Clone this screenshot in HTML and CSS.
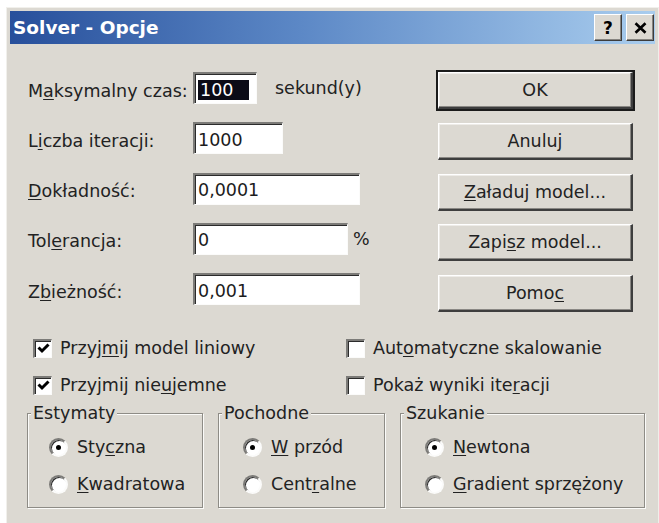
FILE: index.html
```html
<!DOCTYPE html>
<html lang="pl">
<head>
<meta charset="utf-8">
<title>Solver - Opcje</title>
<link rel="stylesheet" href="styles.css">
</head>
<body>
<div class="dialog">
  <div class="titlebar">
    <span class="title">Solver - Opcje</span>
    <div class="cap-btns">
      <span class="cap-btn">?</span>
      <span class="cap-btn">
        <svg width="13" height="12" viewBox="0 0 13 12"><path d="M1.5 1.2 L11.5 10.8 M11.5 1.2 L1.5 10.8" stroke="#000" stroke-width="2.6" fill="none"/></svg>
      </span>
    </div>
  </div>

  <div class="content">
    <div class="top">
      <div class="fields">
        <span class="lbl">M<u>a</u>ksymalny czas:</span>
        <div class="field-line">
          <div class="edit w-time"><span class="sel">100</span></div>
          <span class="unit-sec">sekund(y)</span>
        </div>

        <span class="lbl">L<u>i</u>czba iteracji:</span>
        <div class="field-line"><div class="edit w-iter">1000</div></div>

        <span class="lbl"><u>D</u>okładność:</span>
        <div class="field-line"><div class="edit w-prec">0,0001</div></div>

        <span class="lbl">Tol<u>e</u>rancja:</span>
        <div class="field-line">
          <div class="edit w-tol">0</div>
          <span class="unit-pct">%</span>
        </div>

        <span class="lbl">Z<u>b</u>ieżność:</span>
        <div class="field-line"><div class="edit w-conv">0,001</div></div>
      </div>

      <div class="buttons">
        <div class="btn btn-default">OK</div>
        <div class="btn">Anuluj</div>
        <div class="btn"><u>Z</u>aładuj model...</div>
        <div class="btn">Zapi<u>s</u>z model...</div>
        <div class="btn">Pomo<u>c</u></div>
      </div>
    </div>

    <div class="checks">
      <div class="check">
        <span class="box"><svg width="15" height="15" viewBox="0 0 15 15"><path d="M2.5 6.5 L6 10 L12.5 3.5" stroke="#000" stroke-width="3" fill="none"/></svg></span>
        <span>Przyj<u>m</u>ij model liniowy</span>
      </div>
      <div class="check">
        <span class="box"></span>
        <span>Aut<u>o</u>matyczne skalowanie</span>
      </div>
      <div class="check">
        <span class="box"><svg width="15" height="15" viewBox="0 0 15 15"><path d="M2.5 6.5 L6 10 L12.5 3.5" stroke="#000" stroke-width="3" fill="none"/></svg></span>
        <span>Przyjmij nie<u>u</u>jemne</span>
      </div>
      <div class="check">
        <span class="box"></span>
        <span>Pokaż wyniki ite<u>r</u>acji</span>
      </div>
    </div>

    <div class="groups">
      <fieldset class="group g-est">
        <legend>Estymaty</legend>
        <div class="radio-list">
          <div class="opt"><span class="radio on"></span><span>Sty<u>c</u>zna</span></div>
          <div class="opt"><span class="radio"></span><span><u>K</u>wadratowa</span></div>
        </div>
      </fieldset>
      <fieldset class="group g-der">
        <legend>Pochodne</legend>
        <div class="radio-list">
          <div class="opt"><span class="radio on"></span><span><u>W</u> przód</span></div>
          <div class="opt"><span class="radio"></span><span>Cent<u>r</u>alne</span></div>
        </div>
      </fieldset>
      <fieldset class="group g-search">
        <legend>Szukanie</legend>
        <div class="radio-list">
          <div class="opt"><span class="radio on"></span><span><u>N</u>ewtona</span></div>
          <div class="opt"><span class="radio"></span><span><u>G</u>radient sprzężony</span></div>
        </div>
      </fieldset>
    </div>
  </div>
</div>
</body>
</html>
```

FILE: styles.css
```css
* {
  box-sizing: border-box;
}

body {
  margin: 0;
  background: #ffffff;
  font-family: "DejaVu Sans", Tahoma, sans-serif;
  font-size: 17.5px;
  color: #222222;
}

u {
  text-decoration-thickness: 1px;
  text-underline-offset: 2px;
}

/* window frame */
.dialog {
  margin: 7px 0 0 6px;
  width: 653px;
  height: 516px;
  padding: 3px;
  background: #dcd9d2;
  border-top: 1px solid #f1f0ec;
  border-left: 1px solid #f1f0ec;
  border-right: 1px solid #efeeea;
}

.titlebar {
  height: 33px;
  display: flex;
  align-items: center;
  justify-content: space-between;
  padding: 0 1px 0 3px;
  background: linear-gradient(90deg, #274f9b 0%, #5c88c6 45%, #a9cdee 100%);
}

.title {
  color: #ffffff;
  font-weight: bold;
  font-size: 18.5px;
}

.cap-btns {
  display: flex;
  gap: 4px;
}

.cap-btn {
  width: 28px;
  height: 27px;
  display: flex;
  align-items: center;
  justify-content: center;
  background: #dcd9d2;
  border: 1px solid;
  border-color: #ffffff #3c3c3c #3c3c3c #ffffff;
  box-shadow: inset -1px -1px 0 #868480;
  font-weight: bold;
  font-size: 17px;
  color: #000000;
}

/* dialog body */
.content {
  padding: 28px 0 0 18px;
}

.top {
  display: grid;
  grid-template-columns: 410px 195px;
}

.fields {
  display: grid;
  grid-template-columns: 165px auto;
  grid-auto-rows: 32px;
  row-gap: 18.25px;
  align-items: center;
}

.lbl {
  padding-top: 5px;
  white-space: nowrap;
}

.field-line {
  display: flex;
  align-items: center;
}

.edit {
  height: 32px;
  display: flex;
  align-items: center;
  padding: 2px 0 0 3px;
  background: #ffffff;
  border-style: solid;
  border-width: 2px 1px 1px 2px;
  border-color: #7c7b78 #fbfbfa #fbfbfa #7c7b78;
  box-shadow: inset 1px 1px 0 #2b2b2b;
  color: #1c1c1c;
}

.w-time { width: 64px; }
.w-iter { width: 90px; }
.w-prec { width: 167px; }
.w-tol  { width: 155px; }
.w-conv { width: 167px; }

.sel {
  background: #0b0b16;
  color: #ffffff;
  padding: 0 16px 0 2px;
  line-height: 20px;
}

.unit-sec {
  margin-left: 18px;
}

.unit-pct {
  margin-left: 5px;
}

/* command buttons */
.buttons {
  display: flex;
  flex-direction: column;
  gap: 13.75px;
}

.btn {
  height: 37px;
  display: flex;
  align-items: center;
  justify-content: center;
  background: #dcd9d2;
  border-style: solid;
  border-width: 1px 2px 2px 1px;
  border-color: #ffffff #3e3e3e #3e3e3e #ffffff;
  box-shadow: inset -1px -1px 0 #8a8884, inset 1px 1px 0 #eeece8;
  white-space: nowrap;
}

.btn-default {
  outline: 2px solid #1b1b1b;
}

/* check boxes */
.checks {
  display: grid;
  grid-template-columns: 313px auto;
  grid-auto-rows: 20px;
  row-gap: 17px;
  margin: 26px 0 0 5px;
}

.check {
  display: flex;
  align-items: center;
  gap: 8px;
  white-space: nowrap;
}

.box {
  width: 19px;
  height: 19px;
  flex: none;
  display: flex;
  align-items: center;
  justify-content: center;
  background: #ffffff;
  border-style: solid;
  border-width: 2px 1px 1px 2px;
  border-color: #7c7b78 #fbfbfa #fbfbfa #7c7b78;
  box-shadow: inset 1px 1px 0 #2b2b2b;
}

/* option groups */
.groups {
  display: flex;
  gap: 15px;
  margin: 8px 0 0 -1px;
}

.group {
  margin: 0;
  min-width: 0;
  padding: 14px 0 13px 0;
  border: 1px solid #8e8c86;
  box-shadow: inset 1px 1px 0 #fbfbf9, 1px 1px 0 #fbfbf9;
}

.group legend {
  margin-left: 3px;
  padding: 0 2px;
  line-height: 20px;
  background: #dcd9d2;
}

.g-est    { width: 176px; }
.g-der    { width: 167px; }
.g-search { width: 245px; }

.radio-list {
  display: flex;
  flex-direction: column;
  gap: 17px;
  padding-left: 24px;
}

.g-est .radio-list {
  padding-left: 21px;
}

.opt {
  height: 20px;
  display: flex;
  align-items: center;
  gap: 9px;
  white-space: nowrap;
}

.radio {
  width: 19px;
  height: 19px;
  flex: none;
  display: flex;
  align-items: center;
  justify-content: center;
  border-radius: 50%;
  background: #ffffff;
  border: 2px solid;
  border-color: #7c7b78 #fbfbfa #fbfbfa #7c7b78;
  box-shadow: inset 1px 1px 0 #2b2b2b;
}

.radio.on::after {
  content: "";
  width: 5px;
  height: 5px;
  border-radius: 50%;
  background: #000000;
}
```
